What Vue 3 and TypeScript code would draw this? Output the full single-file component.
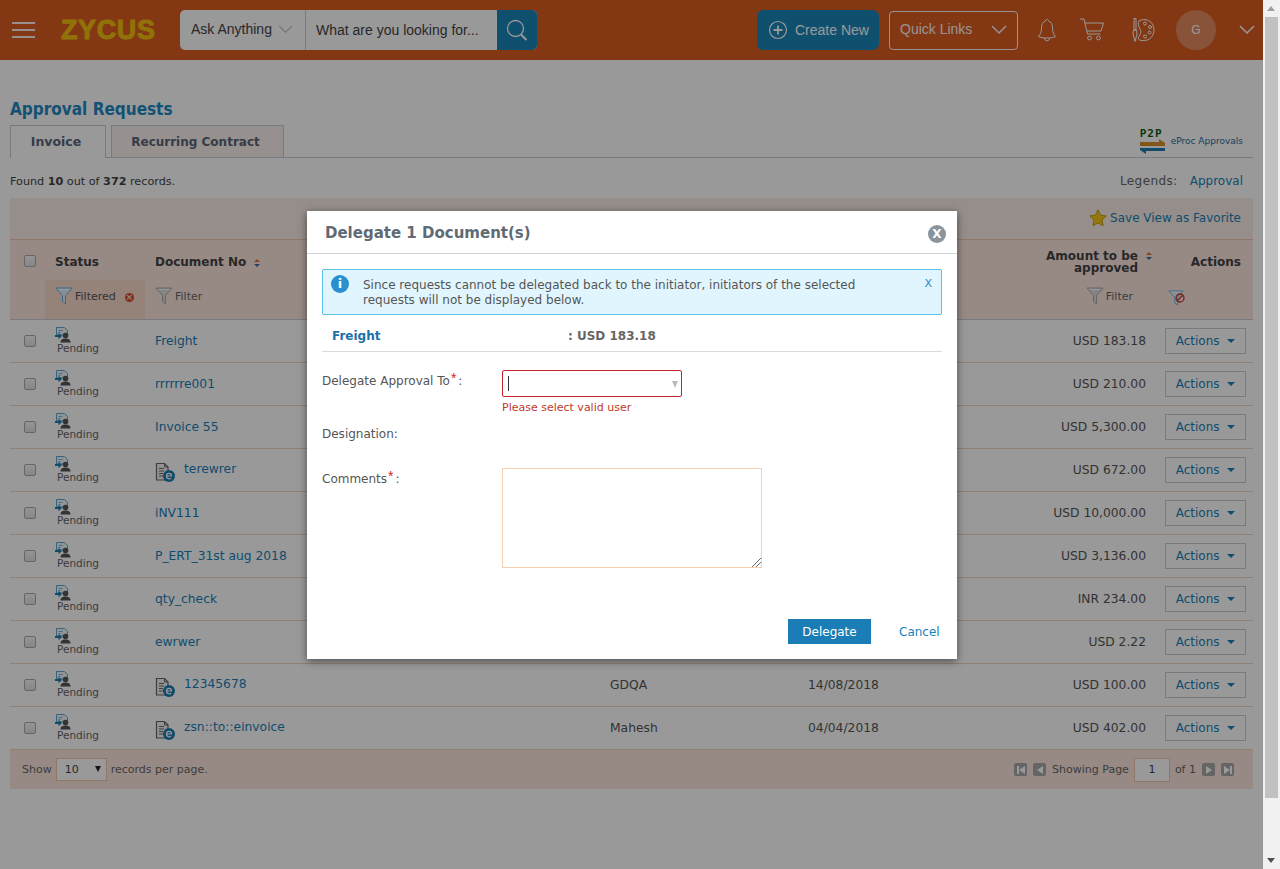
<script setup lang="ts">
interface Row {
  doc: string;
  amount: string;
  eDoc?: boolean;
  requester?: string;
  date?: string;
}

const rows: Row[] = [
  { doc: 'Freight', amount: 'USD 183.18' },
  { doc: 'rrrrrre001', amount: 'USD 210.00' },
  { doc: 'Invoice 55', amount: 'USD 5,300.00' },
  { doc: 'terewrer', amount: 'USD 672.00', eDoc: true },
  { doc: 'iNV111', amount: 'USD 10,000.00' },
  { doc: 'P_ERT_31st aug 2018', amount: 'USD 3,136.00' },
  { doc: 'qty_check', amount: 'INR 234.00' },
  { doc: 'ewrwer', amount: 'USD 2.22' },
  { doc: '12345678', amount: 'USD 100.00', eDoc: true, requester: 'GDQA', date: '14/08/2018' },
  { doc: 'zsn::to::einvoice', amount: 'USD 402.00', eDoc: true, requester: 'Mahesh', date: '04/04/2018' },
];
</script>

<template>
  <div class="screen">
    <svg class="sprite" aria-hidden="true">
      <symbol id="funnel" viewBox="0 0 18 18">
        <path d="M1 1h16l-6.500 7.500V17l-3-2.500V8.500z" fill="var(--fun-fill)" stroke="var(--fun-line)" stroke-width="1" />
        <path d="M3.500 2.500h11" stroke="#fff" stroke-width="1" />
      </symbol>
      <symbol id="pending" viewBox="0 0 16 16">
        <path d="M1.500.5h8l3 3V8h-11z" fill="#eef7fc" stroke="#5fa6cf" />
        <path d="M3.500 3.500h4M3.500 5.500h2" stroke="#7fb6d6" />
        <circle cx="10.500" cy="8.500" r="2.800" fill="#555" />
        <path d="M5.500 15.500c0-3 2-4 5-4s5 1 5 4z" fill="#555" />
        <path d="M0 8h3.500V5.800L7 9l-3.500 3.200V10H0z" fill="#1b7db5" />
      </symbol>
      <symbol id="edoc" viewBox="0 0 20 20">
        <path d="M1.500 1.500h8l3.500 3.500v13h-11.500z" fill="#f4f4f4" stroke="#666" stroke-width="1.200" />
        <path d="M9.500 1.500V5H13" fill="none" stroke="#666" />
        <path d="M4 6.500h5M4 9h5M4 11.500h4M4 14h4" stroke="#666" />
        <circle cx="14" cy="14" r="6" fill="#1b7db5" />
        <path d="M11.500 14h5c0-1.700-1.100-2.600-2.400-2.600s-2.600 1.100-2.600 2.700 1.100 2.700 2.700 2.700c.9 0 1.500-.2 2-.7" fill="none" stroke="#fff" stroke-width="1.200" />
      </symbol>
      <symbol id="chev" viewBox="0 0 16 10">
        <path d="M1 1l7 7 7-7" fill="none" stroke="currentColor" stroke-width="1.500" />
      </symbol>
      <symbol id="sort" viewBox="0 0 6 8">
        <path d="M3 0l3 3H0z" fill="#e0703a" />
        <path d="M0 5h6L3 8z" fill="#3a6ea5" />
      </symbol>
    </svg>

    <div class="page">
      <header class="topbar">
        <button class="burger"><i></i><i></i><i></i></button>
        <span class="logo">ZYCUS</span>
        <div class="search">
          <div class="search-type">
            <span>Ask Anything</span>
            <svg class="search-chev"><use href="#chev" /></svg>
          </div>
          <div class="search-field">What are you looking for...</div>
          <div class="search-btn">
            <svg width="26" height="26" viewBox="0 0 26 26" fill="none">
              <circle cx="11.500" cy="11.500" r="8" stroke="#fff" stroke-width="1.300" />
              <path d="M17 17.500l5.500 5.500" stroke="#fff" stroke-width="2" />
            </svg>
          </div>
        </div>
        <div class="top-right">
          <button class="create">
            <svg width="20" height="20" viewBox="0 0 20 20" fill="none">
              <circle cx="10" cy="10" r="8.500" stroke="#fff" stroke-width="1.200" />
              <path d="M10 5.500v9M5.500 10h9" stroke="#fff" stroke-width="1.800" />
            </svg>
            Create New
          </button>
          <div class="quick">
            <span>Quick Links</span>
            <svg class="quick-chev"><use href="#chev" /></svg>
          </div>
          <svg class="ico-bell" width="20" height="26" viewBox="0 0 20 26" fill="none" stroke="#fff" stroke-width="1">
            <path d="M10 2.500c-1 0-1.500.6-1.500 1.500C5.500 5 4.500 7.500 4.500 11c0 4-1 6-3 8.500 2 1 5 1.500 8.500 1.500s6.500-.5 8.500-1.500c-2-2.500-3-4.500-3-8.500 0-3.500-1-6-4-7 0-.9-.5-1.500-1.500-1.500z" />
            <path d="M7.500 21c0 1.800 1 2.800 2.500 2.800s2.500-1 2.500-2.800" />
          </svg>
          <svg class="ico-cart" width="26" height="26" viewBox="0 0 26 26" fill="none" stroke="#fff" stroke-width="1">
            <path d="M1 2h4l3.500 15h13" />
            <path d="M6 6h18.500l-2.500 8H8" />
            <circle cx="10.500" cy="21" r="1.900" />
            <circle cx="19.500" cy="21" r="1.900" />
          </svg>
          <svg class="ico-palette" width="24" height="26" viewBox="0 0 24 26" fill="none" stroke="#fff" stroke-width="1">
            <path d="M8 4c6-3.500 15-.5 15 9 0 8-7.500 12.500-14.500 10-2-.8-1-3 0-4.500 1.500-2.500 2-4 .5-6.500C7.500 9 6.500 6 8 4z" />
            <circle cx="14" cy="6.500" r="1.500" />
            <circle cx="19" cy="10" r="1.500" />
            <circle cx="18.500" cy="15.500" r="1.500" />
            <circle cx="14" cy="19.500" r="1.500" />
            <path d="M3 1.500h2V13H3zM2.500 13h3l.5 4-2 7.500-2-7.500z" />
          </svg>
          <div class="avatar">G</div>
          <svg class="user-chev"><use href="#chev" /></svg>
        </div>
      </header>

      <main class="content">
        <h1 class="title">Approval Requests</h1>
        <div class="tabs">
          <div class="tab tab-on">Invoice</div>
          <div class="tab">Recurring Contract</div>
          <div class="eproc">
            <span class="p2p">
              <b>P2P</b>
              <svg width="25" height="15" viewBox="0 0 25 15">
                <path d="M0 3h19V0l6 4v3H0z" fill="#d98f28" />
                <path d="M0 9h25v3H6v3l-6-4z" fill="#1b7db5" />
              </svg>
            </span>
            <span class="eproc-label">eProc Approvals</span>
          </div>
        </div>

        <div class="found">
          <span>Found <b>10</b> out of <b>372</b> records.</span>
          <span class="legends">Legends: <a>Approval</a></span>
        </div>

        <div class="toolbar">
          <svg width="18" height="18" viewBox="0 0 18 18">
            <path d="M9 .8l2.500 5.400 5.700.7-4.200 4 1.100 5.800L9 13.900l-5.100 2.800L5 10.900l-4.200-4 5.700-.7z" fill="#f7c815" stroke="#c89a10" />
          </svg>
          <a>Save View as Favorite</a>
        </div>

        <div class="head-labels grid">
          <div class="cell-check"><span class="check"></span></div>
          <div class="th">Status</div>
          <div class="th">Document No<svg class="sort"><use href="#sort" /></svg></div>
          <div></div>
          <div></div>
          <div class="th th-amount"><span>Amount to be<br />approved</span><svg class="sort sort-top"><use href="#sort" /></svg></div>
          <div class="th th-actions">Actions</div>
        </div>
        <div class="head-filters">
          <div></div>
          <div class="filter filter-on">
            <svg class="funnel blue"><use href="#funnel" /></svg>
            <span>Filtered</span>
            <span class="clear">×</span>
          </div>
          <div class="filter filter-doc">
            <svg class="funnel"><use href="#funnel" /></svg>
            <span>Filter</span>
          </div>
          <div></div>
          <div></div>
          <div class="filter filter-amount">
            <svg class="funnel"><use href="#funnel" /></svg>
            <span>Filter</span>
          </div>
          <div class="filter-reset">
            <svg class="funnel blue"><use href="#funnel" /></svg>
            <svg class="nosign" width="10" height="10" viewBox="0 0 10 10" fill="none">
              <circle cx="5" cy="5" r="4" stroke="#c0392b" stroke-width="1.300" />
              <path d="M2.200 7.800l5.600-5.600" stroke="#c0392b" stroke-width="1.300" />
            </svg>
          </div>
        </div>

        <div v-for="row in rows" :key="row.doc" class="row grid">
          <div class="cell-check"><span class="check"></span></div>
          <div class="status">
            <svg width="16" height="16"><use href="#pending" /></svg>
            <span>Pending</span>
          </div>
          <div class="doc">
            <svg v-if="row.eDoc" class="edoc" width="20" height="20"><use href="#edoc" /></svg>
            <a :class="{ 'doc-e': row.eDoc }">{{ row.doc }}</a>
          </div>
          <div class="plain">{{ row.requester }}</div>
          <div class="plain">{{ row.date }}</div>
          <div class="amount">{{ row.amount }}</div>
          <div class="actions-cell">
            <button class="actions">Actions <i class="caret"></i></button>
          </div>
        </div>

        <footer class="pager-bar">
          <div class="per-page">
            <span>Show</span>
            <div class="page-size">10 <i></i></div>
            <span>records per page.</span>
          </div>
          <div class="pager">
            <span class="pg"><i class="bar"></i><i class="tri-l"></i></span>
            <span class="pg"><i class="tri-l"></i></span>
            <span class="pg-label">Showing Page</span>
            <span class="pg-input">1</span>
            <span>of 1</span>
            <span class="pg"><i class="tri-r"></i></span>
            <span class="pg"><i class="tri-r"></i><i class="bar"></i></span>
          </div>
        </footer>
      </main>

      <div class="mask"></div>

      <section class="modal">
        <header class="modal-head">
          <h2>Delegate 1 Document(s)</h2>
          <span class="modal-close">X</span>
        </header>
        <div class="modal-body">
          <div class="alert">
            <span class="alert-ico">i</span>
            <p>Since requests cannot be delegated back to the initiator, initiators of the selected requests will not be displayed below.</p>
            <span class="alert-x">X</span>
          </div>
          <div class="summary">
            <b class="summary-doc">Freight</b>
            <b class="summary-amt">: USD 183.18</b>
          </div>
          <div class="form-row form-user">
            <label>Delegate Approval To<em>*</em>:</label>
            <div>
              <div class="combo"><i class="cursor"></i><i class="combo-arrow"></i></div>
              <div class="error">Please select valid user</div>
            </div>
          </div>
          <div class="form-row form-desig"><label>Designation:</label></div>
          <div class="form-row">
            <label class="lbl-comments">Comments<em>*</em>:</label>
            <div class="textarea">
              <svg class="grip" width="9" height="9" viewBox="0 0 9 9">
                <path d="M9 0L0 9M9 4L4 9" stroke="#666" fill="none" />
              </svg>
            </div>
          </div>
          <div class="modal-foot">
            <button class="delegate">Delegate</button>
            <a class="cancel">Cancel</a>
          </div>
        </div>
      </section>
    </div>

    <div class="scrollbar">
      <i class="sb-up"></i>
      <div class="sb-thumb"></div>
      <i class="sb-down"></i>
    </div>
  </div>
</template>

<style>
html, body { margin: 0; overflow: hidden; background: #fff; }
</style>

<style scoped>
.screen {
  display: flex;
  height: 869px;
  overflow: hidden;
  font: 12px "DejaVu Sans", sans-serif;
  color: #444;
  --link: #1a7fb8;
}
.sprite { position: absolute; width: 0; height: 0; }
.page { position: relative; flex: 1; min-width: 0; background: #fff; }
a { color: var(--link); }
button { font: inherit; border: 0; padding: 0; background: none; }

/* top bar */
.topbar {
  display: flex;
  align-items: center;
  height: 60px;
  background: #da5c20;
  font-family: "Liberation Sans", sans-serif;
  color: #fff;
}
.burger { display: flex; flex-direction: column; gap: 5px; width: 23px; margin-left: 12px; }
.burger i { height: 2px; background: #fff; opacity: .9; }
.logo {
  margin-left: 26px;
  width: 119px;
  font: 700 27px "Liberation Sans", sans-serif;
  color: #f2be10;
  -webkit-text-stroke: 1px #f2be10;
  letter-spacing: .6px;
}
.search { display: flex; height: 40px; border-radius: 5px; overflow: hidden; background: #fff; color: #444; font-size: 14px; }
.search-type {
  display: flex;
  align-items: center;
  width: 126px;
  padding: 0 0 2px 11px;
  box-sizing: border-box;
  border-right: 1px solid #ccc;
}
.search-chev { width: 15px; height: 9px; margin-left: 6px; color: #ccc; }
.search-field { display: flex; align-items: center; width: 191px; padding-left: 10px; box-sizing: border-box; }
.search-btn { display: flex; align-items: center; justify-content: center; width: 40px; background: #1b85b9; }
.top-right { display: flex; align-items: center; margin-left: auto; }
.create {
  display: flex;
  align-items: center;
  gap: 7px;
  width: 122px;
  height: 40px;
  padding-left: 11px;
  box-sizing: border-box;
  border-radius: 6px;
  background: #1b85b9;
  font-size: 14px;
  color: #fff;
  font-family: "Liberation Sans", sans-serif;
}
.quick {
  display: flex;
  align-items: center;
  justify-content: space-between;
  width: 129px;
  height: 39px;
  margin-left: 10px;
  padding: 0 10px 2px;
  box-sizing: border-box;
  border: 1px solid #fff;
  border-radius: 4px;
  font-size: 14px;
  color: #fff;
  opacity: .95;
}
.quick-chev { width: 16px; height: 10px; margin: 2px 0 0; }
.ico-bell { margin-left: 19px; }
.ico-cart { margin-left: 22px; }
.ico-palette { margin-left: 26px; }
.avatar {
  display: flex;
  align-items: center;
  justify-content: center;
  width: 40px;
  height: 40px;
  margin-left: 21px;
  border-radius: 50%;
  background: #e48a5f;
  font-size: 12px;
}
.user-chev { width: 16px; height: 10px; margin: 0 8px 0 23px; }

/* main */
.content { padding: 40px 10px 0; }
.title {
  margin: 0;
  height: 25px;
  font: 700 17px/18px "DejaVu Sans Condensed", "DejaVu Sans", sans-serif;
  color: #2189c4;
}
.tabs { display: flex; align-items: flex-end; height: 32px; border-bottom: 1px solid #c5cbd8; }
.tab {
  display: flex;
  align-items: center;
  justify-content: center;
  box-sizing: border-box;
  height: 32px;
  padding: 1px 4px 0 0;
  width: 173px;
  margin-left: 5px;
  border: 1px solid #c5cbd8;
  border-bottom: 0;
  background: #fbf2ee;
  font-weight: 700;
  font-size: 12px;
  color: #5a6478;
}
.tab-on { width: 96px; height: 33px; margin: 0 0 -1px; padding: 0 4px 1px 0; background: #fff; font-size: 12.500px; }
.eproc { display: flex; align-items: flex-end; margin: 0 10px 3px auto; }
.p2p { display: flex; flex-direction: column; width: 25px; }
.p2p b { font: 700 11px/10px "DejaVu Sans Mono", monospace; color: #0d5c10; letter-spacing: 1px; }
.eproc-label { margin: 0 0 8px 6px; font-size: 9px; color: #1f6c9c; }
.found { display: flex; justify-content: space-between; align-items: center; height: 40px; padding: 6px 10px 0 0; box-sizing: border-box; font-size: 11.200px; }
.legends { font-size: 12px; color: #666; letter-spacing: .4px; }
.legends a { margin-left: 8px; letter-spacing: 0; }
.toolbar {
  display: flex;
  align-items: center;
  justify-content: flex-end;
  gap: 3px;
  height: 42px;
  padding: 0 12px 2px 0;
  box-sizing: border-box;
  background: #f8ede6;
  border-bottom: 1px solid #f4c4a8;
}
.grid { display: grid; grid-template-columns: 45px 100px 455px 198px 150px 188px 107px; }
.head-labels { height: 40px; box-sizing: border-box; padding-top: 4px; align-items: center; background: #fce6de; }
.head-filters {
  display: grid;
  grid-template-columns: 35px 100px 465px 198px 150px 188px 107px;
  height: 39px;
  align-items: stretch;
  background: #fce6de;
  border-bottom: 1px solid #c6ccd8;
}
.cell-check { display: flex; align-items: center; padding-left: 14px; }
.head-labels .cell-check { margin-top: -2px; }
.check {
  width: 10px;
  height: 10px;
  border: 1px solid #aaa;
  border-radius: 2px;
  background: linear-gradient(#f8f8f8, #e0e0e0);
}
.th { font-weight: 700; font-size: 12px; color: #444; white-space: nowrap; }
.sort { width: 6px; height: 8px; margin-left: 8px; vertical-align: -1px; }
.th-amount { display: flex; justify-content: flex-end; align-items: flex-start; line-height: 12px; margin-right: -6px; }
.th-amount > span:first-child { text-align: right; margin-right: 8px; }
.sort-top { margin: 2px 0 0; }
.th-actions { text-align: right; padding-right: 12px; }
.filter { display: flex; align-items: center; gap: 2px; padding-bottom: 7px; font-size: 11px; color: #666; }
.filter-on { padding-left: 10px; background: #f9d9ca; color: #555; }
.filter-doc { padding-left: 10px; }
.funnel { width: 18px; height: 18px; --fun-fill: #ddd; --fun-line: #aaa; }
.funnel.blue { --fun-fill: #dff1fb; --fun-line: #5fb3e0; }
.clear {
  display: inline-flex;
  align-items: center;
  justify-content: center;
  width: 9px;
  height: 9px;
  margin: 2px 0 0 7px;
  border-radius: 50%;
  background: #d9502a;
  color: #fff;
  font-size: 9px;
  line-height: 9px;
}
.filter-amount { justify-content: flex-end; padding-right: 13px; }
.filter-reset { position: relative; display: flex; align-items: center; padding: 0 0 3px 22px; }
.filter-reset .funnel { width: 16px; height: 16px; }
.nosign { position: absolute; left: 29px; top: 13px; }

.row { height: 43px; align-items: center; background: #fff; border-bottom: 1px solid #f0d4c4; box-sizing: border-box; font-size: 12.300px; }
.status { display: flex; flex-direction: column; align-self: start; padding-top: 7px; font-size: 10.500px; line-height: 12px; color: #666; }
.status span { margin: -1px 0 0 2px; }
.doc { display: flex; align-items: center; }
.edoc { margin: 3px 9px 0 0; }
.doc a { margin-top: 0; }
.doc a.doc-e { margin-top: -3px; }
.plain { color: #555; }
.amount { text-align: right; color: #555; }
.actions-cell { padding-left: 19px; }
.actions {
  width: 81px;
  height: 26px;
  box-sizing: border-box;
  border: 1px solid #c5cbd8;
  background: #fff;
  color: var(--link);
  font-size: 12px;
}
.caret {
  display: inline-block;
  margin-left: 4px;
  vertical-align: 2px;
  border-top: 4px solid var(--link);
  border-left: 4px solid transparent;
  border-right: 4px solid transparent;
}

.pager-bar {
  display: flex;
  align-items: center;
  justify-content: space-between;
  height: 39px;
  padding: 0 19px 0 12px;
  background: #fce6de;
  font-size: 11px;
  color: #666;
}
.per-page { display: flex; align-items: center; gap: 4px; }
.page-size {
  display: flex;
  align-items: center;
  justify-content: space-between;
  box-sizing: border-box;
  width: 51px;
  height: 23px;
  padding: 0 5px 0 8px;
  border: 1px solid #f2c5a8;
  background: #fff;
  color: #444;
}
.page-size i { border-top: 6px solid #222; border-left: 3.500px solid transparent; border-right: 3.500px solid transparent; margin-top: -2px; }
.pager { display: flex; align-items: center; }
.pg {
  display: flex;
  align-items: center;
  justify-content: center;
  width: 13px;
  height: 13px;
  margin-left: 6px;
  border-radius: 2px;
  background: #a8a8a8;
}
.pg:first-child { margin-left: 0; }
.pg i { display: block; }
.tri-l { border-right: 6px solid #fff; border-top: 4px solid transparent; border-bottom: 4px solid transparent; }
.tri-r { border-left: 6px solid #fff; border-top: 4px solid transparent; border-bottom: 4px solid transparent; }
.bar { width: 2px; height: 8px; background: #fff; }
.pg-label { margin: 0 5px 0 6px; }
.pg-input {
  display: flex;
  align-items: center;
  justify-content: center;
  box-sizing: border-box;
  width: 36px;
  height: 24px;
  margin-right: 5px;
  border: 1px solid #f2c5a8;
  background: #fff;
  color: #444;
}

.mask { position: absolute; inset: 0; background: rgba(0, 0, 0, .4); }

/* modal */
.modal {
  position: absolute;
  left: 307px;
  top: 211px;
  width: 650px;
  height: 448px;
  background: #fff;
  box-shadow: 0 2px 8px rgba(0, 0, 0, .5);
}
.modal-head {
  display: flex;
  align-items: center;
  justify-content: space-between;
  box-sizing: border-box;
  height: 43px;
  padding: 2px 11px 0 18px;
  border-bottom: 1px solid #ccd6dc;
}
.modal-head h2 { margin: 0; font-size: 15px; font-weight: 700; color: #5f6a74; }
.modal-close {
  display: flex;
  align-items: center;
  justify-content: center;
  width: 18px;
  height: 18px;
  margin-top: 2px;
  border-radius: 50%;
  background: #8a949c;
  color: #fff;
  font-weight: 700;
  font-size: 12px;
}
.modal-body { padding: 15px 15px 0; }
.alert {
  display: flex;
  box-sizing: border-box;
  height: 46px;
  padding: 5px 9px 0 8px;
  border: 1px solid #5cc0e8;
  border-radius: 2px;
  background: #e1f5fe;
  color: #555;
}
.alert-ico {
  flex: none;
  width: 18px;
  height: 18px;
  border-radius: 50%;
  background: #2c8fd0;
  color: #fff;
  font: 700 13px/18px "DejaVu Sans", sans-serif;
  text-align: center;
}
.alert p { flex: 1; margin: 3px 60px 0 14px; line-height: 15px; }
.alert-x { margin-top: 2px; font-size: 11px; color: #2b8ac2; }
.summary {
  display: flex;
  align-items: center;
  box-sizing: border-box;
  height: 37px;
  padding: 6px 0 0 10px;
  border-bottom: 1px solid #ddd9d6;
  font-size: 12px;
}
.summary-doc { width: 236px; color: #1a72a8; }
.summary-amt { color: #666; }
.form-row { display: flex; color: #555; }
.form-row label { width: 180px; flex: none; }
em { color: #e02020; font: 14px/1 "Liberation Sans", sans-serif; margin: 0 2px 0 1px; vertical-align: 2px; }
.form-user { margin-top: 18px; height: 55px; }
.form-user label { padding-top: 1px; }
.form-desig { height: 43px; padding-top: 2px; box-sizing: border-box; }
.lbl-comments { padding-top: 1px; }
.combo {
  position: relative;
  display: flex;
  align-items: center;
  box-sizing: border-box;
  width: 180px;
  height: 27px;
  padding-left: 5px;
  border: 1px solid #c0272d;
  border-radius: 2px;
}
.cursor { width: 1px; height: 15px; background: #333; }
.combo-arrow {
  position: absolute;
  right: 3px;
  top: 10px;
  border-top: 7px solid #bbb;
  border-left: 3.500px solid transparent;
  border-right: 3.500px solid transparent;
}
.error { margin-top: 4px; font-size: 11px; color: #c0392b; }
.textarea {
  position: relative;
  box-sizing: border-box;
  width: 260px;
  height: 100px;
  border: 1px solid #f8cfb0;
}
.grip { position: absolute; right: 0; bottom: 0; }
.modal-foot { display: flex; align-items: center; justify-content: flex-end; margin-top: 51px; padding-right: 3px; }
.delegate { width: 83px; height: 25px; background: #1a7db5; color: #fff; font-size: 12px; }
.cancel { margin-left: 28px; width: 40px; }

/* scrollbar */
.scrollbar { position: relative; flex: none; display: flex; flex-direction: column; width: 17px; background: #f1f1f1; }
.sb-thumb { width: 13px; height: 781px; margin: 17px 2px 0; background: #c1c1c1; }
.sb-up, .sb-down { position: absolute; left: 4px; border-left: 4.500px solid transparent; border-right: 4.500px solid transparent; }
.sb-up { top: 6px; border-bottom: 5px solid #a0a0a0; }
.sb-down { bottom: 6px; border-top: 5px solid #505050; }
</style>
